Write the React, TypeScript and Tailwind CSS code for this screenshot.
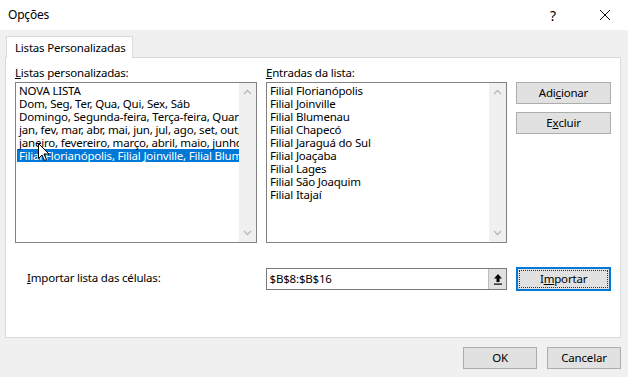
import React from 'react';

const font = { fontFamily: '"Noto Sans", "Open Sans", sans-serif' };

const customLists = [
  'NOVA LISTA',
  'Dom, Seg, Ter, Qua, Qui, Sex, Sáb',
  'Domingo, Segunda-feira, Terça-feira, Quarta-feira, Quinta-feira, Sexta-feira, Sábado',
  'jan, fev, mar, abr, mai, jun, jul, ago, set, out, nov, dez',
  'janeiro, fevereiro, março, abril, maio, junho, julho, agosto, setembro, outubro, novembro, dezembro',
  'Filial Florianópolis, Filial Joinville, Filial Blumenau, Filial Chapecó, Filial Jaraguá do Sul',
];

const entries = [
  'Filial Florianópolis',
  'Filial Joinville',
  'Filial Blumenau',
  'Filial Chapecó',
  'Filial Jaraguá do Sul',
  'Filial Joaçaba',
  'Filial Lages',
  'Filial São Joaquim',
  'Filial Itajaí',
];

const Chevron = ({ up }: { up?: boolean }) => (
  <svg width="9" height="6" viewBox="0 0 9 6" className={up ? '' : 'rotate-180'}>
    <path d="M1 5 L4.5 1.5 L8 5" fill="none" stroke="#b8b8b8" strokeWidth="1.3" />
  </svg>
);

const Scrollbar = () => (
  <div className="w-[17px] h-full bg-[#f0f0f0] flex flex-col justify-between items-center py-[6px] shrink-0">
    <Chevron up />
    <Chevron />
  </div>
);

const ListBox = ({ items, selected }: { items: string[]; selected?: number }) => (
  <div className="h-[161px] w-full border border-[#828282] bg-white flex">
    <div className="flex-1 min-w-0 overflow-hidden py-[1px] pl-[1px]">
      {items.map((t, i) => (
        <div
          key={i}
          className={`h-[13px] leading-[13px] px-[2px] whitespace-nowrap ${
            i === selected ? 'bg-[#0078d7] text-white' : 'text-black'
          }`}
        >
          {t}
        </div>
      ))}
    </div>
    <Scrollbar />
  </div>
);

const Btn = ({ children, className = '' }: { children: React.ReactNode; className?: string }) => (
  <button className={`bg-[#e1e1e1] border border-[#adadad] text-black flex items-center justify-center ${className}`}>
    {children}
  </button>
);

export default function App() {
  return (
    <div
      className="w-[628px] h-[377px] bg-[#f0f0f0] flex flex-col text-[11.5px] tracking-[-0.2px] text-black relative overflow-hidden whitespace-nowrap"
      style={font}
    >
      {/* Title bar */}
      <div className="h-[30px] bg-white flex items-center pl-[8px] shrink-0 text-[12px]">
        <span className="flex-1">Opções</span>
        <span className="text-[14px] mr-[43px]">?</span>
        <svg width="12" height="12" viewBox="0 0 12 12" className="mr-[17px]">
          <path d="M1 1 L11 11 M11 1 L1 11" stroke="#111" strokeWidth="1" />
        </svg>
      </div>

      {/* Tabs */}
      <div className="px-[5px] pt-[6px] flex flex-col">
        <div className="ml-[1px] w-[127px] h-[22px] bg-white border border-[#d9d9d9] border-b-0 -mb-px relative z-10 flex items-center pl-[8px]">
          Listas Personalizadas
        </div>
        <div className="w-[616px] h-[281px] bg-white border border-[#d9d9d9] flex flex-col px-[9px] pt-[8px]">
          <div className="flex">
            <div className="w-[242px] flex flex-col">
              <div className="h-[16px] leading-[14px]"><u>L</u>istas personalizadas:</div>
              <ListBox items={customLists} selected={5} />
            </div>
            <div className="w-[242px] ml-[9px] flex flex-col">
              <div className="h-[16px] leading-[14px]"><u>E</u>ntradas da lista:</div>
              <ListBox items={entries} />
            </div>
            <div className="ml-[9px] pt-[16px] flex flex-col gap-[8px]">
              <Btn className="w-[95px] h-[22px]">Adi<u>c</u>ionar</Btn>
              <Btn className="w-[95px] h-[22px]">E<u>x</u>cluir</Btn>
            </div>
          </div>

          <div className="flex items-center mt-[24px]">
            <div className="w-[242px] pl-[12px] pb-[3px]"><u>I</u>mportar lista das células:</div>
            <div className="ml-[9px] w-[242px] h-[22px] border border-[#7a7a7a] bg-white flex">
              <div className="flex-1 pl-[3px] leading-[20px]">$B$8:$B$16</div>
              <div className="w-[18px] h-full bg-[#e1e1e1] border-l border-[#bdbdbd] flex items-center justify-center">
                <svg width="10" height="12" viewBox="0 0 10 12">
                  <path d="M5 1 L9 5.5 L6.5 5.5 L6.5 9 L3.5 9 L3.5 5.5 L1 5.5 Z" fill="#000" />
                  <rect x="1" y="10.5" width="8" height="1.2" fill="#000" />
                </svg>
              </div>
            </div>
            <button className="ml-[9px] w-[95px] h-[24px] bg-[#e1e1e1] border-2 border-[#0078d7] p-[1px] flex">
              <span className="flex-1 border border-dotted border-[#333] flex items-center justify-center">
                I<u>m</u>portar
              </span>
            </button>
          </div>
        </div>
      </div>

      {/* Footer */}
      <div className="flex justify-end gap-[10px] pr-[7px] pt-[9px]">
        <Btn className="w-[74px] h-[22px]">OK</Btn>
        <Btn className="w-[74px] h-[22px]">Cancelar</Btn>
      </div>

      {/* Mouse pointer over the selected list item */}
      <svg width="13" height="19" viewBox="0 0 13 19" className="absolute left-[38px] top-[143px] z-20">
        <path d="M0.5 0.5 L0.5 15.5 L4 12 L6.5 17.5 L8.5 16.5 L6 11 L11 11 Z" fill="#fff" stroke="#000" strokeWidth="1" />
      </svg>
    </div>
  );
}
